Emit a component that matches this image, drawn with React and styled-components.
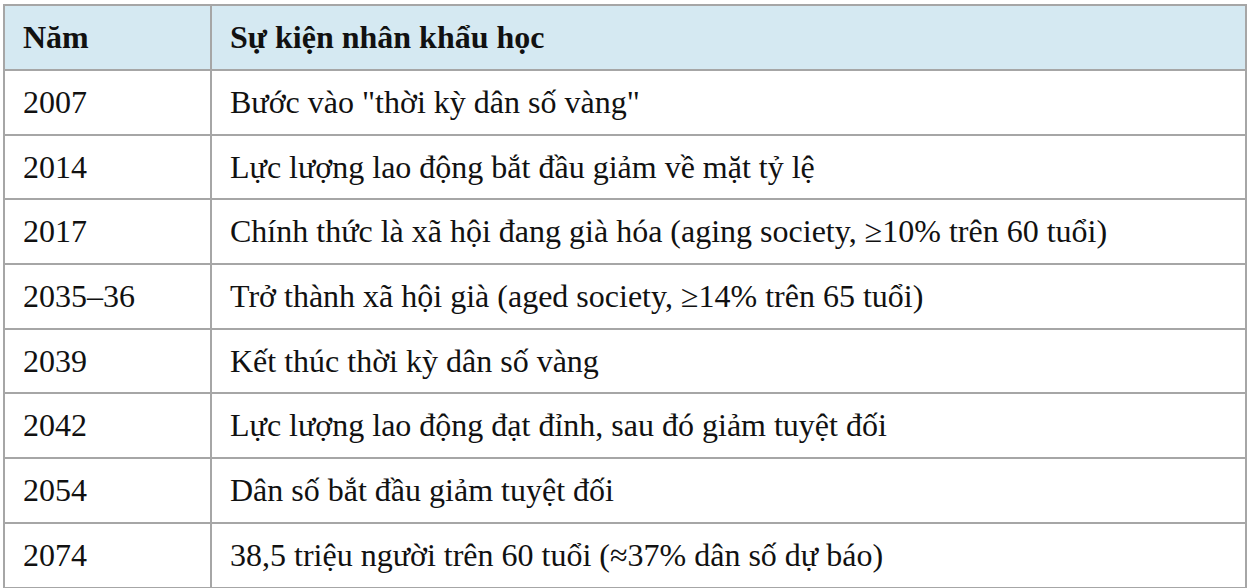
import React from 'react';
import styled, { createGlobalStyle } from 'styled-components';

const GlobalStyle = createGlobalStyle`
    html, body {
        margin: 0;
        padding: 0;
        background: #ffffff;
    }
    body {
        font-family: "Liberation Serif", "Times New Roman", serif;
        color: #111;
    }
`

const Page = styled.div`
    padding: 4px 0 0 3px;
    width: 1244px;
`

const Table = styled.table`
    width: 1244px;
    border-collapse: collapse;
    table-layout: fixed;
    font-size: 32px;
`

const HeadCell = styled.th`
    height: 63px;
    padding: 0 0 0 ${p => p.$pad}px;
    text-align: left;
    font-weight: bold;
    background: #d5e9f2;
    border: 2px solid #a6a6a6;
`

const Cell = styled.td`
    height: 62.7px;
    padding: 0 0 0 ${p => p.$pad}px;
    text-align: left;
    border: 2px solid #a6a6a6;
    background: #ffffff;
    white-space: nowrap;
`

const rows = [
    ['2007', 'Bước vào "thời kỳ dân số vàng"'],
    ['2014', 'Lực lượng lao động bắt đầu giảm về mặt tỷ lệ'],
    ['2017', 'Chính thức là xã hội đang già hóa (aging society, ≥10% trên 60 tuổi)'],
    ['2035–36', 'Trở thành xã hội già (aged society, ≥14% trên 65 tuổi)'],
    ['2039', 'Kết thúc thời kỳ dân số vàng'],
    ['2042', 'Lực lượng lao động đạt đỉnh, sau đó giảm tuyệt đối'],
    ['2054', 'Dân số bắt đầu giảm tuyệt đối'],
    ['2074', '38,5 triệu người trên 60 tuổi (≈37% dân số dự báo)'],
];

export default function App() {
    return (
        <Page>
            <GlobalStyle />
            <Table>
                <colgroup>
                    <col style={{ width: '207px' }} />
                    <col />
                </colgroup>
                <thead>
                    <tr>
                        <HeadCell $pad={18}>Năm</HeadCell>
                        <HeadCell $pad={18}>Sự kiện nhân khẩu học</HeadCell>
                    </tr>
                </thead>
                <tbody>
                    {rows.map(([year, text]) => (
                        <tr key={year}>
                            <Cell $pad={18}>{year}</Cell>
                            <Cell $pad={18}>{text}</Cell>
                        </tr>
                    ))}
                </tbody>
            </Table>
        </Page>
    );
}
